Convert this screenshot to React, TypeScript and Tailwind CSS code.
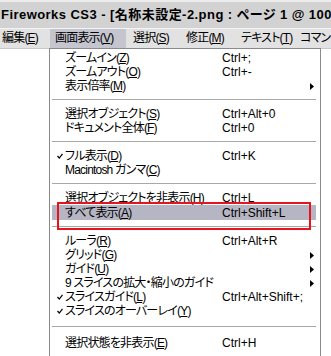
type Entry =
  | "sep"
  | {
      label: string;
      mn?: string;
      sc?: string;
      check?: boolean;
      arrow?: boolean;
      active?: boolean;
    };

const entries: Entry[] = [
  { label: "ズームイン", mn: "Z", sc: "Ctrl+;" },
  { label: "ズームアウト", mn: "O", sc: "Ctrl+-" },
  { label: "表示倍率", mn: "M", arrow: true },
  "sep",
  { label: "選択オブジェクト", mn: "S", sc: "Ctrl+Alt+0" },
  { label: "ドキュメント全体", mn: "F", sc: "Ctrl+0" },
  "sep",
  { label: "フル表示", mn: "D", sc: "Ctrl+K", check: true },
  { label: "Macintosh ガンマ", mn: "C" },
  "sep",
  { label: "選択オブジェクトを非表示", mn: "H", sc: "Ctrl+L" },
  { label: "すべて表示", mn: "A", sc: "Ctrl+Shift+L", active: true },
  "sep",
  { label: "ルーラ", mn: "R", sc: "Ctrl+Alt+R" },
  { label: "グリッド", mn: "G", arrow: true },
  { label: "ガイド", mn: "U", arrow: true },
  { label: "9 スライスの拡大・縮小のガイド", arrow: true },
  { label: "スライスガイド", mn: "L", sc: "Ctrl+Alt+Shift+;", check: true },
  { label: "スライスのオーバーレイ", mn: "Y", check: true },
  "sep",
  { label: "選択状態を非表示", mn: "E", sc: "Ctrl+H" },
];

const menuBar = [
  { label: "編集", mn: "E", cls: "w-[50px] pl-[2px]" },
  { label: "画面表示", mn: "V", cls: "w-[76px] pl-[5px] bg-[#c4c5cf]" },
  { label: "選択", mn: "S", cls: "w-[53px] pl-[7px]" },
  { label: "修正", mn: "M", cls: "w-[55px] pl-[7px]" },
  { label: "テキスト", mn: "T", cls: "w-[64px] pl-[7px]" },
  { label: "コマンド", mn: "C", cls: "pl-[2px]" },
];

function Mnemonic({ label, mn }: { label: string; mn?: string }) {
  return (
    <span className="whitespace-nowrap tracking-[-0.8px]">
      {label}
      {mn && (
        <>
          (<span className="underline underline-offset-[1px]">{mn}</span>)
        </>
      )}
    </span>
  );
}

function Check() {
  return (
    <svg width="6" height="6" viewBox="0 0 6 6" className="ml-[5px]">
      <path d="M0.5 3 L2.3 5 L5.5 0.8" fill="none" stroke="#000" strokeWidth="1.2" />
    </svg>
  );
}

function Arrow() {
  return (
    <svg width="4" height="7" viewBox="0 0 4 7">
      <polygon points="0,0 4,3.5 0,7" fill="#000" />
    </svg>
  );
}

export default function App() {
  return (
    <div className="relative h-[356px] w-[331px] overflow-hidden bg-white font-['Liberation_Sans','Noto_Sans_CJK_JP',sans-serif] text-[12px] text-black [font-feature-settings:'palt']">
      {/* title bar */}
      <div className="flex h-[28px] items-center overflow-hidden whitespace-nowrap border-t-2 border-[#ececec] bg-[#d2d2d2] pl-[1px] text-[13px] font-bold tracking-[0.45px]">
        Fireworks CS3 - [名称未設定-2.png : ページ 1 @ 100%]
      </div>

      {/* menu bar */}
      <div className="flex h-[20px] items-stretch border-t border-[#f4f4f4] bg-[#e2e2e2] leading-[19px]">
        {menuBar.map((m) => (
          <div key={m.label} className={`shrink-0 whitespace-nowrap ${m.cls}`}>
            <Mnemonic label={m.label} mn={m.mn} />
          </div>
        ))}
      </div>

      {/* dropdown */}
      <div className="flex">
        <div className="w-[49px] shrink-0 border-t border-[#c8c8c8]" />
        <div className="w-[272px] shrink-0 border border-[#8a8a8a] bg-white px-[2px] pb-[6px] pt-[2px] pr-[4px]">
          {entries.map((e, i) =>
            e === "sep" ? (
              <div
                key={i}
                className={`flex items-center ${i === entries.length - 2 ? "h-[18px]" : "h-[14px]"}`}
              >
                <div className="h-[2px] w-full border-t border-b border-t-[#a8a8a8] border-b-white" />
              </div>
            ) : (
              <div
                key={i}
                className={`relative flex items-center leading-[14px] ${
                  e.active ? "h-[15px] bg-[#b5b5c3]" : "h-[14px]"
                }`}
              >
                <div className="flex w-[13px] shrink-0 items-center">
                  {e.check && <Check />}
                </div>
                <div className="w-[157px] shrink-0">
                  <Mnemonic label={e.label} mn={e.mn} />
                </div>
                <div className="flex-1 whitespace-nowrap">{e.sc}</div>
                <div className="flex w-[6px] shrink-0 items-center">
                  {e.arrow && <Arrow />}
                </div>
                {e.active && (
                  <div className="pointer-events-none absolute -bottom-[10px] -top-[3px] left-[5px] right-[5px] z-10 border-2 border-[#e8141c]" />
                )}
              </div>
            )
          )}
        </div>
        <div className="flex-1 border-t border-[#c8c8c8]" />
      </div>
    </div>
  );
}
